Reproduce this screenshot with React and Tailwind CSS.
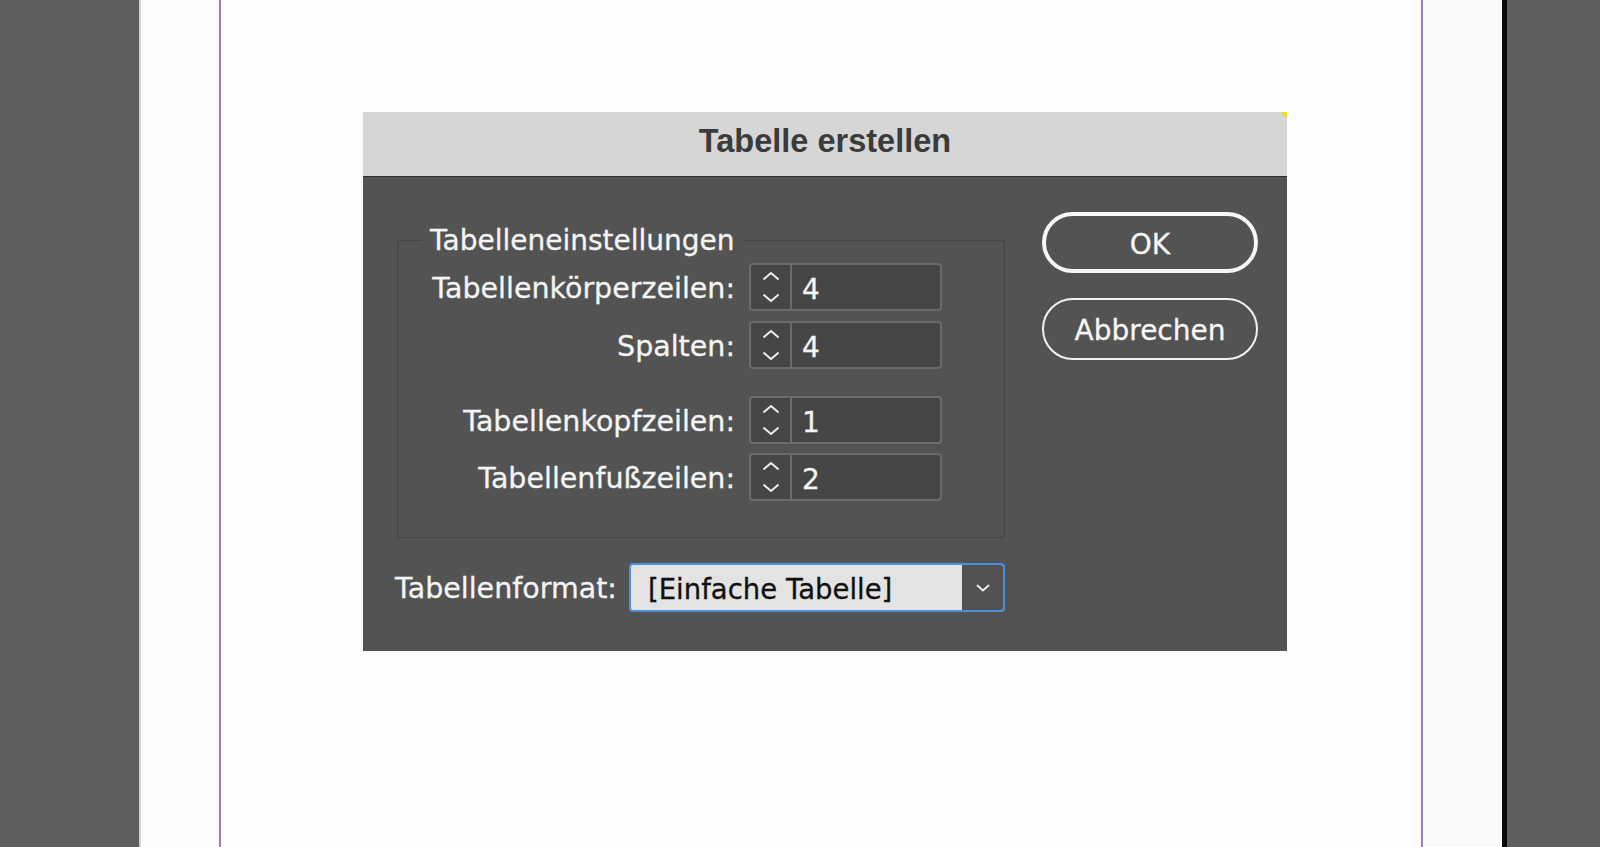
import React from "react";

const body = { fontFamily: '"DejaVu Sans", "Noto Sans", sans-serif' };

function Spinner({ value }) {
  return (
    <div className="flex h-[48px] w-[193px] rounded-[4px] border-2 border-[#6b6b6b] bg-[#464646]">
      <div className="flex w-[41px] items-center justify-center border-r-2 border-[#6b6b6b]">
        <svg width="18" height="34" viewBox="0 0 18 34" fill="none" stroke="#f0f0f0" strokeWidth="1.9" strokeLinecap="round" strokeLinejoin="round">
          <polyline points="2,9 9,3 16,9" />
          <polyline points="2,25 9,31 16,25" />
        </svg>
      </div>
      <div className="flex flex-1 items-center pl-[10px] pt-[5px] text-[28px] leading-none text-[#f4f4f4] [-webkit-text-stroke:0.3px_#f4f4f4]">{value}</div>
    </div>
  );
}

function Row({ label, value, className }) {
  return (
    <div className={"flex items-center " + className}>
      <div className="w-[351px] pr-[14px] pt-[5px] text-right text-[28.5px] leading-none text-[#f4f4f4] [-webkit-text-stroke:0.3px_#f4f4f4]">{label}</div>
      <Spinner value={value} />
    </div>
  );
}

export default function App() {
  return (
    <div className="flex h-[847px] w-[1600px] overflow-hidden" style={body}>
      <div className="w-[139px] shrink-0 bg-[#5e5e5e]" />
      <div className="w-[2px] shrink-0 bg-[#d4d4d4]" />
      <div className="w-[78px] shrink-0 bg-[#fbfbfb]" />
      <div className="w-[2px] shrink-0 bg-[#9a7dc6]" />
      <div className="w-[1200px] shrink-0 bg-[#fdfdfd] pl-[142px] pt-[112px]">
        <div className="relative w-[924px]">
          <div className="absolute right-0 top-0 h-0 w-0 border-l-[6px] border-t-[6px] border-l-transparent border-t-[#f2e000]" />
          <div
            className="flex h-[64px] items-center justify-center bg-[#d6d6d6] pb-[6px] text-[32.5px] font-bold text-[#3b3b3b]"
            style={{ fontFamily: '"Liberation Sans", Arial, sans-serif' }}
          >
            Tabelle erstellen
          </div>
          <div className="h-[1px] bg-[#2f2f2f]" />
          <div className="flex h-[474px] bg-[#535353] pl-[32px] pr-[29px] pt-[35px]">
            <div className="flex w-[610px] flex-col">
              <fieldset className="ml-[2px] mt-[12px] h-[314px] rounded-[2px] border border-[#444444] p-0">
                <legend className="ml-[24px] px-[8px] text-[28px] leading-[33px] text-[#f4f4f4] [-webkit-text-stroke:0.3px_#f4f4f4]">
                  Tabelleneinstellungen
                </legend>
                <Row label="Tabellenkörperzeilen:" value="4" className="mt-[6px]" />
                <Row label="Spalten:" value="4" className="mt-[10px]" />
                <Row label="Tabellenkopfzeilen:" value="1" className="mt-[27px]" />
                <Row label="Tabellenfußzeilen:" value="2" className="mt-[9px]" />
              </fieldset>
              <div className="mt-[25px] flex items-center">
                <div className="w-[234px] pt-[4px] text-[28.5px] leading-none text-[#f4f4f4] [-webkit-text-stroke:0.3px_#f4f4f4]">Tabellenformat:</div>
                <div className="flex h-[49px] w-[376px] overflow-hidden rounded-[4px] border-2 border-[#4a8fe0] bg-[#e3e3e3]">
                  <div className="flex flex-1 items-center pl-[17px] pt-[4px] text-[27.5px] leading-none text-[#111111] [-webkit-text-stroke:0.3px_#111111]">
                    [Einfache Tabelle]
                  </div>
                  <div className="flex w-[41px] items-center justify-center bg-[#525252]">
                    <svg width="14" height="8" viewBox="0 0 14 8" fill="none" stroke="#f0f0f0" strokeWidth="1.8" strokeLinecap="round" strokeLinejoin="round">
                      <polyline points="1.5,1.5 7,6.5 12.5,1.5" />
                    </svg>
                  </div>
                </div>
              </div>
            </div>
            <div className="ml-[37px] flex flex-col">
              <button className="flex h-[61px] w-[216px] items-center justify-center rounded-full border-[4px] border-[#f7f7f7] pt-[4px] text-[28px] leading-none text-[#f7f7f7] [-webkit-text-stroke:0.3px_#f7f7f7]">
                OK
              </button>
              <button className="mt-[25px] flex h-[62px] w-[216px] items-center justify-center rounded-full border-2 border-[#f2f2f2] pt-[4px] text-[28px] leading-none text-[#f7f7f7] [-webkit-text-stroke:0.3px_#f7f7f7]">
                Abbrechen
              </button>
            </div>
          </div>
        </div>
      </div>
      <div className="w-[2px] shrink-0 bg-[#9a7dc6]" />
      <div className="w-[79px] shrink-0 bg-[#fafafa]" />
      <div className="w-[5px] shrink-0 bg-[#0a0a0a]" />
      <div className="flex-1 bg-[#5e5e5e]" />
    </div>
  );
}
